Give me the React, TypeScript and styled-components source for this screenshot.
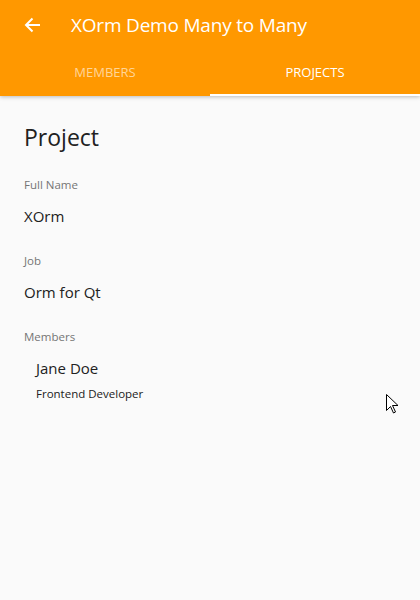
import React from "react";
import styled, { createGlobalStyle } from "styled-components";

const Global = createGlobalStyle`
  html, body { margin: 0; padding: 0; }
  body { background: #fafafa; font-family: "Open Sans", "Noto Sans", sans-serif; }
`;

const Page = styled.div`
  width: 420px;
  height: 600px;
  background: #fafafa;
  position: relative;
  overflow: hidden;
`;

const Header = styled.header`
  background: #ff9800;
  box-shadow: 0 1px 4px rgba(0, 0, 0, 0.25);
  position: relative;
  z-index: 1;
`;

const Toolbar = styled.div`
  height: 48px;
  display: flex;
  align-items: center;
  padding-left: 24px;
  padding-top: 2px;
  box-sizing: border-box;
  gap: 30px;
`;

const Title = styled.div`
  color: #fff;
  font-size: 19px;
  letter-spacing: -0.2px;
`;

const Tabs = styled.div`
  display: grid;
  grid-template-columns: 1fr 1fr;
  height: 48px;
`;

const Tab = styled.div<{ $active?: boolean }>`
  display: flex;
  align-items: center;
  justify-content: center;
  font-size: 13px;
  color: ${(p) => (p.$active ? "#fff" : "rgba(255,255,255,0.6)")};
  border-bottom: 2px solid ${(p) => (p.$active ? "#fff" : "transparent")};
  padding-top: 2px;
  box-sizing: border-box;
`;

const Content = styled.main`
  padding: 25px 24px;
  display: flex;
  flex-direction: column;
`;

const Heading = styled.h1`
  margin: 0 0 24px;
  font-size: 23px;
  font-weight: 400;
  color: #212121;
`;

const Label = styled.div`
  font-size: 11.5px;
  color: #757575;
  margin-bottom: 14px;
`;

const Value = styled.div`
  font-size: 15px;
  color: #212121;
  margin-bottom: 27px;
`;

const Member = styled.div`
  padding-left: 12px;
  display: flex;
  flex-direction: column;
  gap: 8px;
`;

const MemberName = styled.div`
  font-size: 15px;
  color: #212121;
`;

const MemberRole = styled.div`
  font-size: 11.5px;
  color: #212121;
`;

const Cursor = styled.svg`
  position: absolute;
  left: 386px;
  top: 394px;
`;

export default function App() {
  return (
    <Page>
      <Global />
      <Header>
        <Toolbar>
          <svg width="17" height="16" viewBox="0 0 17 16" fill="none">
            <path d="M16 8H2M8.5 1.5L2 8l6.5 6.5" stroke="#fff" strokeWidth="2" />
          </svg>
          <Title>XOrm Demo Many to Many</Title>
        </Toolbar>
        <Tabs>
          <Tab>MEMBERS</Tab>
          <Tab $active>PROJECTS</Tab>
        </Tabs>
      </Header>
      <Content>
        <Heading>Project</Heading>
        <Label>Full Name</Label>
        <Value>XOrm</Value>
        <Label>Job</Label>
        <Value>Orm for Qt</Value>
        <Label>Members</Label>
        <Member>
          <MemberName>Jane Doe</MemberName>
          <MemberRole>Frontend Developer</MemberRole>
        </Member>
      </Content>
      <Cursor width="13" height="20" viewBox="0 0 13 20">
        <path d="M0.5 0.5V16.5L4.5 12.5L7.5 19L9.5 18L6.5 11.5H12L0.5 0.5Z" fill="#fff" stroke="#000" strokeWidth="1" />
      </Cursor>
    </Page>
  );
}
